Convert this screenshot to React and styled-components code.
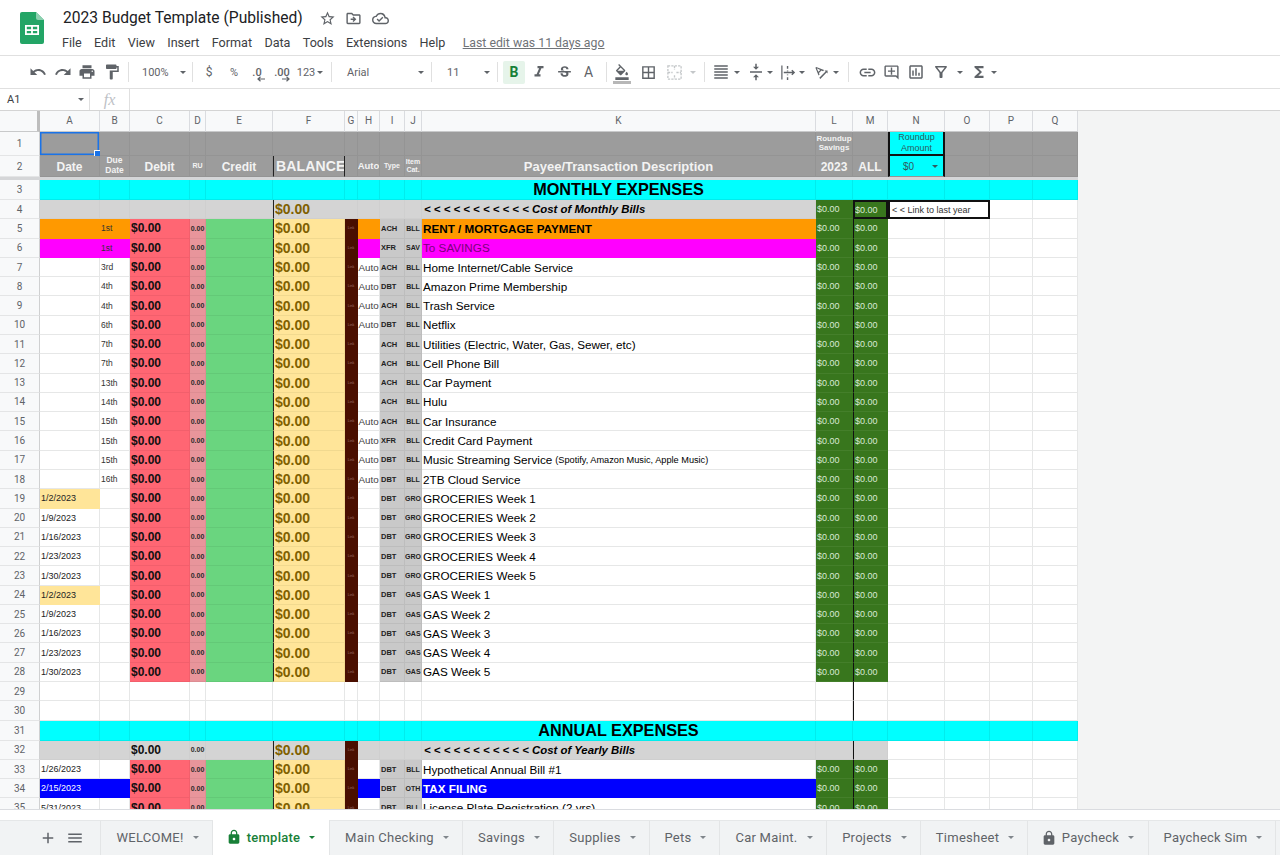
import styled, { createGlobalStyle } from "styled-components";
import {
  MdUndo, MdRedo, MdPrint, MdFormatPaint, MdStarBorder, MdOutlineDriveFileMove, MdOutlineCloudDone,
  MdFormatItalic, MdStrikethroughS, MdFormatColorFill, MdBorderAll, MdFormatAlignJustify,
  MdVerticalAlignCenter, MdTextRotationAngleup, MdLink, MdOutlineAddComment, MdOutlineInsertChart,
  MdFunctions, MdAdd, MdMenu, MdLock, MdOutlineFilterAlt,
} from "react-icons/md";

const GlobalStyle = createGlobalStyle`
  html, body { margin: 0; padding: 0; background: #fff; }
  body { font-family: Roboto, "Liberation Sans", sans-serif; }
  * { box-sizing: border-box; }
`;

const COLUMNS = [40, 60, 30, 60, 16, 67, 72, 13, 22, 25, 17, 394, 37, 35, 57, 45, 43, 45];
const COLUMN_NAMES = "ABCDEFGHIJKLMNOPQ".split("");

const ROW_HEIGHTS = [
  20.5, 24.5, 21, 3, 20, 19.3,
  ...Array(26).fill(19.29),
  20, 19.3, 19.29, 19.29, 19.29,
];

const Page = styled.div`
  width: 1280px;
  height: 855px;
  display: flex;
  flex-direction: column;
  overflow: hidden;
`;

const TitleBar = styled.header`
  height: 56px;
  flex: none;
  display: flex;
  padding: 12px 0 0 20px;
  border-bottom: 1px solid #e0e0e0;
`;

const TitleStack = styled.div`
  margin: -1px 0 0 19px;
  display: flex;
  flex-direction: column;
`;

const TitleRow = styled.div`
  display: flex;
  align-items: center;
  height: 14px;
  color: #5f6368;
`;

const DocTitle = styled.div`
  font-size: 15.6px;
  color: #202124;
  margin-right: 9px;
  width: 242px;
  white-space: nowrap;
`;

const TitleIcon = styled.span`
  display: flex;
  width: 26.5px;
  justify-content: center;
  font-size: 17px;
`;

const MenuRow = styled.nav`
  display: flex;
  align-items: center;
  gap: 12.3px;
  margin: 10px 0 0 -1px;
  font-size: 12.6px;
  color: #3c4043;
`;

const LastEdit = styled.span`
  margin-left: 5px;
  font-size: 12.3px;
  color: #6f7377;
  text-decoration: underline;
`;

const Toolbar = styled.div`
  height: 33px;
  flex: none;
  display: flex;
  align-items: center;
  padding-left: 26px;
  border-bottom: 1px solid #e0e0e0;
  color: #5f6368;
`;

const Tool = styled.span`
  position: relative;
  flex: none;
  width: ${(p) => p.$w || 24.5}px;
  height: 23px;
  display: flex;
  align-items: center;
  justify-content: center;
  font-size: ${(p) => p.$fs || 18}px;
  color: ${(p) => p.$c || "#5f6368"};
  font-weight: ${(p) => p.$fw || 400};
  background: ${(p) => p.$on ? "#e6f4ea" : "transparent"};
  border-radius: 2px;
`;

const ToolText = styled(Tool)`
  font-size: 11px;
  justify-content: flex-start;
`;

const Caret = styled.i`
  flex: none;
  width: 0;
  height: 0;
  margin: ${(p) => p.$m || "0"};
  border-left: 3.5px solid transparent;
  border-right: 3.5px solid transparent;
  border-top: 3.5px solid ${(p) => p.$c || "#5f6368"};
`;

const ToolSep = styled.i`
  flex: none;
  width: 1px;
  height: 20px;
  background: #e0e0e0;
  margin: 0 ${(p) => p.$r || 8}px 0 ${(p) => p.$l || 0}px;
`;

const DecimalArrow = styled.svg`
  position: absolute;
  left: ${(p) => p.$left}px;
  top: 15px;
`;

const FillBar = styled.i`
  position: absolute;
  left: 4px;
  right: 4px;
  bottom: 0;
  height: 3px;
  background: #b7b7b7;
`;

const FormulaBar = styled.div`
  height: 22px;
  flex: none;
  display: flex;
  align-items: center;
  border-bottom: 1px solid #d4d4d4;
`;

const NameBox = styled.div`
  width: 90px;
  height: 100%;
  display: flex;
  align-items: center;
  justify-content: space-between;
  padding: 0 5px 0 7px;
  font-size: 11px;
  color: #3c4043;
  border-right: 1px solid #e0e0e0;
`;

const FxBox = styled.div`
  width: 40px;
  height: 100%;
  display: flex;
  align-items: center;
  justify-content: center;
  border-right: 1px solid #e0e0e0;
  font-family: "Liberation Serif", serif;
  font-style: italic;
  font-size: 16px;
  color: #bdc1c6;
`;

const SheetArea = styled.div`
  flex: none;
  height: 699px;
  overflow: hidden;
  background: #f3f4f4;
  border-bottom: 1px solid #dadce0;
`;

const Sheet = styled.div`
  display: grid;
  width: 1078px;
  background: #fff;
  grid-template-columns: ${COLUMNS.map((w) => `${w}px`).join(" ")};
  grid-template-rows: ${ROW_HEIGHTS.map((h) => `${h}px`).join(" ")};
`;

const Cell = styled.div`
  position: relative;
  min-width: 0;
  overflow: hidden;
  white-space: nowrap;
  display: flex;
  align-items: center;
  font-family: "Liberation Sans", Arial, sans-serif;
  background: ${(p) => p.$bg || "transparent"};
  color: ${(p) => p.$c || "#000"};
  border-right: 1px solid ${(p) => p.$bg || "#e6e7e7"};
  border-bottom: 1px solid ${(p) => p.$bg || "#e6e7e7"};
  ${(p) => p.$span && `grid-column: span ${p.$span};`}
`;

const ColHead = styled(Cell)`
  background: #f8f9fa;
  justify-content: center;
  font-family: Roboto, sans-serif;
  font-size: 10px;
  color: #5f6368;
  border-right: 1px solid #dadce0;
  border-bottom: 1px solid #c8c9ca;
`;

const Corner = styled(ColHead)`
  border-right: 3px solid #bdbdbd;
`;

const RowNum = styled(Cell)`
  background: #f8f9fa;
  justify-content: center;
  font-family: Roboto, sans-serif;
  font-size: 10px;
  color: #5f6368;
  border-right: 1px solid #cfd0d1;
  border-bottom: 1px solid #e4e5e6;
`;

const FreezeBand = styled.div`
  grid-column: 1 / -1;
  background: #d5d6d8;
`;

const HeadCell = styled(Cell)`
  background: #9c9c9c;
  color: #f3f3f3;
  font-weight: 700;
  justify-content: center;
  text-align: center;
  white-space: normal;
  line-height: 1.15;
  font-size: ${(p) => p.$fs || 12}px;
  border-right: 1px solid #949494;
  border-bottom: 1px solid #949494;
`;

const ColumnLabel = styled(HeadCell)`
  padding-top: 3px;
`;

const BalanceHead = styled(HeadCell)`
  border-left: 1px solid #222;
  border-right: 1px solid #222;
  letter-spacing: .15px;
  justify-content: flex-start;
  padding-left: 2px;
  white-space: nowrap;
`;

const SelectedCell = styled(HeadCell)`
  overflow: visible;
  box-shadow: inset 0 0 0 1.5px #1a73e8;
  &::after {
    content: "";
    position: absolute;
    right: -3px;
    bottom: -3px;
    width: 6px;
    height: 6px;
    background: #1a73e8;
    border: 1px solid #fff;
  }
`;

const RoundupCell = styled(Cell)`
  background: #00ffff;
  color: #2f5a60;
  font-size: ${(p) => p.$fs || 9}px;
  line-height: 11px;
  justify-content: center;
  text-align: center;
  white-space: normal;
  border-left: 2px solid #111;
  border-right: 2px solid #111;
  border-bottom: ${(p) => p.$under ? "2px solid #111" : "1px solid #949494"};
`;

const AmountPick = styled(RoundupCell)`
  justify-content: space-between;
  padding: 0 5px 0 13px;
`;

const SectionCell = styled(Cell)`
  background: #00ffff;
  border-right: 1px solid #00eded;
  border-bottom: 1px solid #00eded;
  justify-content: center;
  font-size: 16.25px;
  font-weight: 700;
`;

const GreyCell = styled(Cell)`
  background: #d4d4d4;
  border-right: 1px solid #cfcfcf;
  border-bottom: 1px solid #cfcfcf;
`;

const RuledGrey = styled(GreyCell)`
  border-left: 1px solid #111;
`;

const SummaryCell = styled(GreyCell)`
  font-size: 11.4px;
  font-weight: 700;
  font-style: italic;
  padding-left: 2px;
`;

const DateCell = styled(Cell)`
  font-size: 9px;
  padding-left: 1px;
  color: ${(p) => p.$c || "#222"};
`;

const DueCell = styled(Cell)`
  font-size: 8.5px;
  padding-left: 1px;
  color: #333;
`;

const DebitCell = styled(Cell)`
  background: ${(p) => p.$bg || "#ff6673"};
  border-color: ${(p) => p.$bg ? "#cfcfcf" : "#f25f6c"};
  font-size: 12px;
  font-weight: 700;
  padding-left: 1px;
  color: #111;
`;

const RuCell = styled(Cell)`
  background: ${(p) => p.$bg || "#e8959b"};
  border-color: ${(p) => p.$bg ? "#cfcfcf" : "#dd8d93"};
  font-size: 7px;
  font-weight: 700;
  justify-content: center;
  color: #2b2b2b;
`;

const CreditCell = styled(Cell)`
  background: #6ad57f;
  border-color: #63c977;
`;

const BalanceCell = styled(Cell)`
  background: ${(p) => p.$bg || "#ffe599"};
  border-right-color: ${(p) => p.$bg || "#f1d98f"};
  border-bottom-color: ${(p) => p.$bg ? "#cfcfcf" : "#f1d98f"};
  border-left: 1px solid #222;
  color: #7f6000;
  font-size: 14px;
  font-weight: 700;
  padding-left: 1px;
`;

const GapCell = styled(Cell)`
  background: #4a0f00;
  border-color: #4a0f00;
  justify-content: center;
  font-size: 3.5px;
  color: #9a7468;
`;

const AutoCell = styled(Cell)`
  font-size: 9.8px;
  padding-left: 0.5px;
  color: #444;
`;

const CodeCell = styled(Cell)`
  background: #c9c9c9;
  border-color: #bdbdbd;
  font-size: 7.5px;
  font-weight: 700;
  padding-left: 1px;
  color: #222;
`;

const CatCell = styled(CodeCell)`
  font-size: 7px;
  padding-left: 0;
  justify-content: center;
`;

const DescCell = styled(Cell)`
  font-size: 11.7px;
  font-weight: ${(p) => p.$fw || 400};
  color: ${(p) => p.$ink || "#000"};
  padding-left: 1px;
`;

const FinePrint = styled.span`
  font-size: 9.2px;
  margin-left: 3px;
`;

const SavingsCell = styled(Cell)`
  background: #38761d;
  border-right-color: #38761d;
  border-bottom-color: #447f2a;
  color: #d9ead3;
  font-size: 9px;
  padding-left: 1px;
  ${(p) => p.$ruled && "border-left: 1px solid #111;"}
`;

const SavingsBoxed = styled(SavingsCell)`
  border: 2px solid #111;
  padding-left: 0;
`;

const LinkNote = styled(Cell)`
  border: 2px solid #111;
  font-size: 9px;
  padding-left: 2px;
  color: #333;
`;

const RuledCell = styled(Cell)`
  border-left: 1px solid #111;
`;

const StatusStrip = styled.div`
  height: 10px;
  flex: none;
  background: #fff;
`;

const TabBar = styled.footer`
  flex: 1;
  display: flex;
  background: #f1f3f4;
  border-top: 1px solid #e5e7e8;
`;

const TabActions = styled.div`
  width: 101px;
  flex: none;
  display: flex;
  align-items: center;
  gap: 9px;
  padding-left: 39px;
  color: #5f6368;
  font-size: 18px;
  border-right: 1px solid #e3e5e6;
`;

const Tab = styled.div`
  flex: none;
  width: ${(p) => p.$w}px;
  display: flex;
  align-items: center;
  justify-content: center;
  gap: 9px;
  padding: 0 0 1px 2px;
  font-size: 13px;
  letter-spacing: .25px;
  color: ${(p) => p.$active ? "#188038" : "#5f6368"};
  font-weight: ${(p) => p.$active ? 500 : 400};
  background: ${(p) => p.$active ? "#fff" : "transparent"};
  border-right: 1px solid #e3e5e6;
  margin-top: ${(p) => p.$active ? "-1px" : "0"};
`;

const TabLock = styled(MdLock)`
  margin: 0 -4px 0 -3px;
`;

const LogoMark = () => (
  <svg width="24" height="32" viewBox="0 0 24 32">
    <path d="M2 0h14l8 8v22a2 2 0 0 1-2 2H2a2 2 0 0 1-2-2V2a2 2 0 0 1 2-2z" fill="#23a566" />
    <path d="M16 0l8 8h-6a2 2 0 0 1-2-2z" fill="#8ed1b1" />
    <path d="M5 13h14v10H5z M6.8 14.8v2.4h4.3v-2.4z M12.9 14.8v2.4h4.3v-2.4z M6.8 18.9v2.4h4.3v-2.4z M12.9 18.9v2.4h4.3v-2.4z" fill="#fff" fillRule="evenodd" />
  </svg>
);

const MergeIcon = () => (
  <svg width="17" height="17" viewBox="0 0 18 18" fill="none" stroke="#c4c7c9" strokeWidth="1.4" strokeDasharray="2.4 1.2">
    <path d="M2 2h14v14H2z" />
    <path d="M2 9h5M11 9h5M9 2v4M9 12v4" />
  </svg>
);

const OverflowIcon = () => (
  <svg width="17" height="17" viewBox="0 0 18 18" fill="none" stroke="#5f6368" strokeWidth="1.5">
    <path d="M2 1.5v15" strokeWidth="1.3" />
    <path d="M8 2v3M8 7v1M8 11v1M8 14v3" />
    <path d="M4 9h11M12.5 6.5L15 9l-2.5 2.5" />
  </svg>
);

const SmallArrow = ({ left, flip }) => (
  <DecimalArrow $left={left} width="8" height="6" viewBox="0 0 8 6" fill="none" stroke="#5f6368" strokeWidth="1.2">
    <path d={flip ? "M0 3h7M4.5 .8L7 3 4.5 5.2" : "M8 3H1M3.5 .8L1 3l2.5 2.2"} />
  </DecimalArrow>
);

const MENUS = ["File", "Edit", "View", "Insert", "Format", "Data", "Tools", "Extensions", "Help"];

const TABS = [
  { label: "WELCOME!", w: 112 },
  { label: "template", w: 117, active: true, lock: true },
  { label: "Main Checking", w: 133 },
  { label: "Savings", w: 91 },
  { label: "Supplies", w: 96 },
  { label: "Pets", w: 70 },
  { label: "Car Maint.", w: 107 },
  { label: "Projects", w: 94 },
  { label: "Timesheet", w: 107 },
  { label: "Paycheck", w: 121, lock: true },
  { label: "Paycheck Sim", w: 127 },
];

const bill = (due, auto, type, desc, extra) => ({ due, auto, type, cat: "BLL", desc, extra });
const weekly = (dates, cat, word) =>
  dates.map((date, i) => ({
    date,
    hilite: i === 0,
    type: "DBT",
    cat,
    desc: `${word} Week ${i + 1}`,
  }));

const MONTHS = ["1/2/2023", "1/9/2023", "1/16/2023", "1/23/2023", "1/30/2023"];

const MONTHLY_ROWS = [
  { due: "1st", type: "ACH", cat: "BLL", desc: "RENT / MORTGAGE PAYMENT", fill: "#ff9900", fw: 700 },
  { due: "1st", type: "XFR", cat: "SAV", desc: "To SAVINGS", fill: "#ff00ff", descColor: "#7c007c" },
  bill("3rd", "Auto", "ACH", "Home Internet/Cable Service"),
  bill("4th", "Auto", "DBT", "Amazon Prime Membership"),
  bill("4th", "Auto", "ACH", "Trash Service"),
  bill("6th", "Auto", "DBT", "Netflix"),
  bill("7th", "", "ACH", "Utilities (Electric, Water, Gas, Sewer, etc)"),
  bill("7th", "", "ACH", "Cell Phone Bill"),
  bill("13th", "", "ACH", "Car Payment"),
  bill("14th", "", "ACH", "Hulu"),
  bill("15th", "Auto", "ACH", "Car Insurance"),
  bill("15th", "Auto", "XFR", "Credit Card Payment"),
  bill("15th", "Auto", "DBT", "Music Streaming Service", "(Spotify, Amazon Music, Apple Music)"),
  bill("16th", "Auto", "DBT", "2TB Cloud Service"),
  ...weekly(MONTHS, "GRO", "GROCERIES"),
  ...weekly(MONTHS, "GAS", "GAS"),
];

const ANNUAL_ROWS = [
  { date: "1/26/2023", type: "DBT", cat: "BLL", desc: "Hypothetical Annual Bill #1" },
  { date: "2/15/2023", type: "DBT", cat: "OTH", desc: "TAX FILING", fill: "#0000ff", fw: 700, descColor: "#fff", dateColor: "#fff" },
  { date: "5/31/2023", type: "DBT", cat: "BLL", desc: "License Plate Registration (2 yrs)" },
];

const Blank = ({ count = 1 }) => Array.from({ length: count }, (_, i) => <Cell key={i} />);
const HeadBlank = ({ count }) => Array.from({ length: count }, (_, i) => <HeadCell key={i} />);

const EntryRow = ({ n, row }) => (
  <>
    <RowNum>{n}</RowNum>
    <DateCell $bg={row.hilite ? "#ffe599" : row.fill} $c={row.dateColor}>{row.date}</DateCell>
    <DueCell $bg={row.fill}>{row.due}</DueCell>
    <DebitCell>$0.00</DebitCell>
    <RuCell>0.00</RuCell>
    <CreditCell />
    <BalanceCell>$0.00</BalanceCell>
    <GapCell>Link</GapCell>
    <AutoCell $bg={row.fill}>{row.auto}</AutoCell>
    <CodeCell>{row.type}</CodeCell>
    <CatCell>{row.cat}</CatCell>
    <DescCell $bg={row.fill} $fw={row.fw} $ink={row.descColor}>
      {row.desc}
      {row.extra && <FinePrint>{row.extra}</FinePrint>}
    </DescCell>
    <SavingsCell>$0.00</SavingsCell>
    <SavingsCell $ruled>$0.00</SavingsCell>
    <Blank count={4} />
  </>
);

const EmptyRow = ({ n }) => (
  <>
    <RowNum>{n}</RowNum>
    <Blank count={12} />
    <RuledCell />
    <Blank count={4} />
  </>
);

const SectionRow = ({ n, title }) => (
  <>
    <RowNum>{n}</RowNum>
    {Array.from({ length: 10 }, (_, i) => <SectionCell key={i} />)}
    <SectionCell>{title}</SectionCell>
    {Array.from({ length: 6 }, (_, i) => <SectionCell key={i} />)}
  </>
);

const ARROWS = "< < < < < < < < < < <";

const App = () => (
  <Page>
    <GlobalStyle />
    <TitleBar>
      <LogoMark />
      <TitleStack>
        <TitleRow>
          <DocTitle>2023 Budget Template (Published)</DocTitle>
          <TitleIcon><MdStarBorder /></TitleIcon>
          <TitleIcon><MdOutlineDriveFileMove /></TitleIcon>
          <TitleIcon><MdOutlineCloudDone /></TitleIcon>
        </TitleRow>
        <MenuRow>
          {MENUS.map((m) => <span key={m}>{m}</span>)}
          <LastEdit>Last edit was 11 days ago</LastEdit>
        </MenuRow>
      </TitleStack>
    </TitleBar>

    <Toolbar>
      <Tool><MdUndo /></Tool>
      <Tool><MdRedo /></Tool>
      <Tool><MdPrint /></Tool>
      <Tool><MdFormatPaint /></Tool>
      <ToolSep $l={4} $r={13} />
      <ToolText $w={38}>100%</ToolText>
      <Caret $m="0 6px 0 0" />
      <ToolSep $r={3} />
      <Tool $w={26} $fs={12}>$</Tool>
      <Tool $w={24} $fs={11}>%</Tool>
      <Tool $w={22} $fs={11} $fw={500}>.0<SmallArrow left={11} /></Tool>
      <Tool $w={28} $fs={11} $fw={500}>.00<SmallArrow left={14} flip /></Tool>
      <Tool $w={20} $fs={11}>123</Tool>
      <Caret $m="0 8px 0 1px" />
      <ToolSep $r={15} />
      <ToolText $w={71}>Arial</ToolText>
      <Caret $m="0 7px 0 0" />
      <ToolSep $r={15} />
      <ToolText $w={37}>11</ToolText>
      <Caret $m="0 7px 0 0" />
      <ToolSep $r={5} />
      <Tool $w={22} $fs={14} $fw={700} $c="#188038" $on>B</Tool>
      <Tool $w={27} $fs={18}><MdFormatItalic /></Tool>
      <Tool $w={24} $fs={17}><MdStrikethroughS /></Tool>
      <Tool $w={25} $fs={14}>A</Tool>
      <ToolSep $l={5} $r={2} />
      <Tool $w={26} $fs={16}><MdFormatColorFill /><FillBar /></Tool>
      <Tool $w={26} $fs={17}><MdBorderAll /></Tool>
      <Tool $w={27}><MergeIcon /></Tool>
      <Caret $m="0 8px 0 2px" $c="#c4c7c9" />
      <ToolSep $r={5} />
      <Tool $w={22} $fs={18}><MdFormatAlignJustify /></Tool>
      <Caret $m="0 4.5px 0 1.5px" />
      <Tool $w={23} $fs={18}><MdVerticalAlignCenter /></Tool>
      <Caret $m="0 4px 0 0" />
      <Tool $w={22}><OverflowIcon /></Tool>
      <Caret $m="0 4px 0 0" />
      <Tool $w={24} $fs={17}><MdTextRotationAngleup /></Tool>
      <Caret $m="0 9px 0 0" />
      <ToolSep $r={6} />
      <Tool $w={24} $fs={19}><MdLink /></Tool>
      <Tool $w={24} $fs={17}><MdOutlineAddComment /></Tool>
      <Tool $w={25} $fs={18}><MdOutlineInsertChart /></Tool>
      <Tool $w={25} $fs={18}><MdOutlineFilterAlt /></Tool>
      <Caret $m="0 6px 0 4px" />
      <Tool $w={20} $fs={18}><MdFunctions /></Tool>
      <Caret $m="0 0 0 1.5px" />
    </Toolbar>

    <FormulaBar>
      <NameBox>A1<Caret /></NameBox>
      <FxBox>fx</FxBox>
    </FormulaBar>

    <SheetArea>
      <Sheet>
        <Corner />
        {COLUMN_NAMES.map((c) => <ColHead key={c}>{c}</ColHead>)}

        <RowNum>1</RowNum>
        <SelectedCell />
        <HeadBlank count={10} />
        <HeadCell $fs={8}>Roundup Savings</HeadCell>
        <HeadCell />
        <RoundupCell $under>Roundup Amount</RoundupCell>
        <HeadBlank count={3} />

        <RowNum>2</RowNum>
        <ColumnLabel>Date</ColumnLabel>
        <HeadCell $fs={8.5}>Due Date</HeadCell>
        <ColumnLabel>Debit</ColumnLabel>
        <HeadCell $fs={7}>RU</HeadCell>
        <ColumnLabel>Credit</ColumnLabel>
        <BalanceHead $fs={14}>BALANCE</BalanceHead>
        <HeadCell />
        <HeadCell $fs={9.5}>Auto</HeadCell>
        <HeadCell $fs={7}>Type</HeadCell>
        <HeadCell $fs={7}>Item Cat.</HeadCell>
        <ColumnLabel $fs={13}>Payee/Transaction Description</ColumnLabel>
        <ColumnLabel>2023</ColumnLabel>
        <ColumnLabel>ALL</ColumnLabel>
        <AmountPick $fs={10}>$0<Caret $c="#2f5a60" /></AmountPick>
        <HeadBlank count={3} />

        <FreezeBand />

        <SectionRow n={3} title="MONTHLY EXPENSES" />

        <RowNum>4</RowNum>
        <GreyCell /><GreyCell /><GreyCell /><GreyCell /><GreyCell />
        <BalanceCell $bg="#d4d4d4">$0.00</BalanceCell>
        <GreyCell /><GreyCell /><GreyCell /><GreyCell />
        <SummaryCell>{ARROWS} Cost of Monthly Bills</SummaryCell>
        <SavingsCell>$0.00</SavingsCell>
        <SavingsBoxed>$0.00</SavingsBoxed>
        <LinkNote $span={2}>&lt; &lt; Link to last year</LinkNote>
        <Blank count={2} />

        {MONTHLY_ROWS.map((row, i) => <EntryRow key={i} n={i + 5} row={row} />)}

        <EmptyRow n={29} />
        <EmptyRow n={30} />
        <SectionRow n={31} title="ANNUAL EXPENSES" />

        <RowNum>32</RowNum>
        <GreyCell /><GreyCell />
        <DebitCell $bg="#d4d4d4">$0.00</DebitCell>
        <RuCell $bg="#d4d4d4">0.00</RuCell>
        <GreyCell />
        <BalanceCell $bg="#d4d4d4">$0.00</BalanceCell>
        <GapCell>Link</GapCell>
        <GreyCell /><GreyCell /><GreyCell />
        <SummaryCell>{ARROWS} Cost of Yearly Bills</SummaryCell>
        <GreyCell />
        <RuledGrey />
        <Blank count={4} />

        {ANNUAL_ROWS.map((row, i) => <EntryRow key={i} n={i + 33} row={row} />)}
      </Sheet>
    </SheetArea>

    <StatusStrip />
    <TabBar>
      <TabActions><MdAdd /><MdMenu /></TabActions>
      {TABS.map((t) => (
        <Tab key={t.label} $w={t.w} $active={t.active}>
          {t.lock && <TabLock size={16} />}
          {t.label}
          <Caret $c={t.active ? "#188038" : "#80868b"} />
        </Tab>
      ))}
    </TabBar>
  </Page>
);

export default App;
